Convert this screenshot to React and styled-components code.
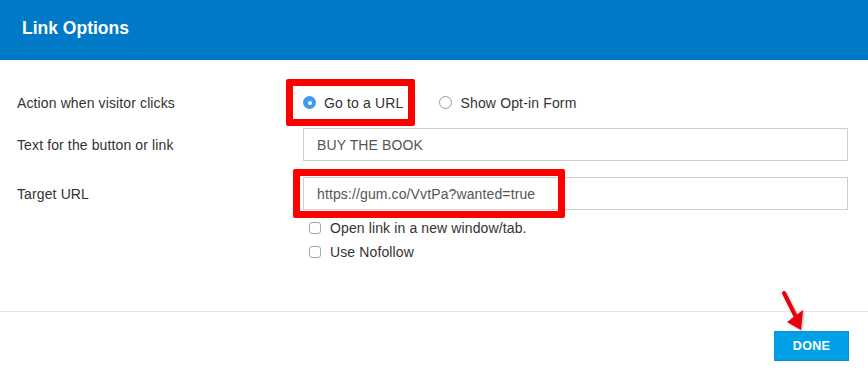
import React from "react";
import styled, { createGlobalStyle } from "styled-components";

const GlobalStyle = createGlobalStyle`
  html, body {
    margin: 0;
    padding: 0;
    background: #ffffff;
  }
  body {
    font-family: "Liberation Sans", Arial, sans-serif;
    color: #333333;
  }
`;

const Dialog = styled.div`
  position: relative;
  width: 868px;
  height: 373px;
  background: #ffffff;
  overflow: hidden;
`;

const Header = styled.header`
  height: 60px;
  background: #0079c6;
  display: flex;
  align-items: center;
  padding: 0 22px;
  box-sizing: border-box;
`;

const Title = styled.h1`
  margin: 0 0 4px;
  font-size: 17.5px;
  font-weight: bold;
  color: #ffffff;
`;

const Body = styled.div`
  display: grid;
  grid-template-columns: 286px 1fr;
  padding: 26px 20px 0 17px;
  height: 252px;
  box-sizing: border-box;
  border-bottom: 1px solid #e3e3e3;
  align-content: start;
`;

const Label = styled.div`
  font-size: 14px;
  letter-spacing: 0.12px;
  display: flex;
  align-items: center;
  height: 33px;
  margin-top: ${(p) => p.$mt || 0}px;
`;

const Field = styled.div`
  display: flex;
  align-items: center;
  height: 33px;
  margin-top: ${(p) => p.$mt || 0}px;
  position: relative;
`;

const RadioGroup = styled.div`
  display: flex;
  align-items: center;
  gap: 36px;
`;

const Choice = styled.label`
  position: relative;
  display: flex;
  align-items: center;
  gap: 8px;
  font-size: 14px;
  letter-spacing: 0.15px;
`;

const RadioDot = styled.span`
  width: 13px;
  height: 13px;
  border-radius: 50%;
  box-sizing: border-box;
  border: ${(p) => (p.$on ? "none" : "1px solid #9a9a9a")};
  background: ${(p) => (p.$on ? "#3d9aee" : "#fff")};
  display: flex;
  align-items: center;
  justify-content: center;
  &::after {
    content: "";
    width: 4px;
    height: 4px;
    border-radius: 50%;
    background: #fff;
    display: ${(p) => (p.$on ? "block" : "none")};
  }
`;

const Highlight = styled.span`
  position: absolute;
  border: 7px solid #ff0000;
  border-radius: 2px;
  pointer-events: none;
  top: ${(p) => p.$t}px;
  left: ${(p) => p.$l}px;
  right: ${(p) => p.$r}px;
  bottom: ${(p) => p.$b}px;
`;

const TextInput = styled.div`
  width: 100%;
  height: 33px;
  box-sizing: border-box;
  border: 1px solid #cfcfcf;
  display: flex;
  align-items: center;
  padding: 0 13px;
  font-size: 14px;
  letter-spacing: 0.12px;
  color: #555555;
`;

const Checks = styled.div`
  grid-column: 2;
  display: flex;
  flex-direction: column;
  gap: 8px;
  padding: 10px 0 0 6px;
`;

const CheckRow = styled.label`
  display: flex;
  align-items: center;
  gap: 9px;
  font-size: 14px;
  letter-spacing: 0.12px;
`;

const Box = styled.span`
  width: 12px;
  height: 12px;
  box-sizing: border-box;
  border: 1px solid #a8a8a8;
  border-radius: 3px;
  background: #fff;
`;

const Footer = styled.div`
  display: flex;
  justify-content: flex-end;
  padding: 19px 19px 0 0;
`;

const DoneButton = styled.button`
  width: 75px;
  height: 30px;
  border: 1px solid #0a8fd0;
  background: #00a0e9;
  color: #ffffff;
  font-family: "Liberation Sans", Arial, sans-serif;
  font-weight: bold;
  font-size: 12.5px;
  letter-spacing: 0.3px;
  padding: 0;
`;

const Arrow = styled.svg`
  position: absolute;
  left: 776px;
  top: 286px;
`;

export default function App() {
  return (
    <Dialog>
      <GlobalStyle />
      <Header>
        <Title>Link Options</Title>
      </Header>
      <Body>
        <Label>Action when visitor clicks</Label>
        <Field>
          <RadioGroup>
            <Choice>
              <Highlight $t={-16} $l={-17} $r={-12} $b={-15} />
              <RadioDot $on />
              Go to a URL
            </Choice>
            <Choice>
              <RadioDot />
              Show Opt-in Form
            </Choice>
          </RadioGroup>
        </Field>
        <Label $mt={9}>Text for the button or link</Label>
        <Field $mt={9}>
          <TextInput>BUY THE BOOK</TextInput>
        </Field>
        <Label $mt={16}>Target URL</Label>
        <Field $mt={16}>
          <TextInput>https://gum.co/VvtPa?wanted=true</TextInput>
          <Highlight $t={-8} $l={-10} $r={283} $b={-8} />
        </Field>
        <Checks>
          <CheckRow>
            <Box />
            Open link in a new window/tab.
          </CheckRow>
          <CheckRow>
            <Box />
            Use Nofollow
          </CheckRow>
        </Checks>
      </Body>
      <Footer>
        <DoneButton>DONE</DoneButton>
      </Footer>
      <Arrow width="34" height="48" viewBox="0 0 34 48">
        <defs>
          <filter id="sh" x="-50%" y="-50%" width="200%" height="200%">
            <feDropShadow dx="1" dy="1" stdDeviation="1" floodOpacity="0.35" />
          </filter>
        </defs>
        <g filter="url(#sh)">
          <path d="M8 7 L19 29" stroke="#e8000b" strokeWidth="4" strokeLinecap="round" />
          <path d="M11 36 L27 24 L25 44 Z" fill="#e8000b" />
        </g>
      </Arrow>
    </Dialog>
  );
}
